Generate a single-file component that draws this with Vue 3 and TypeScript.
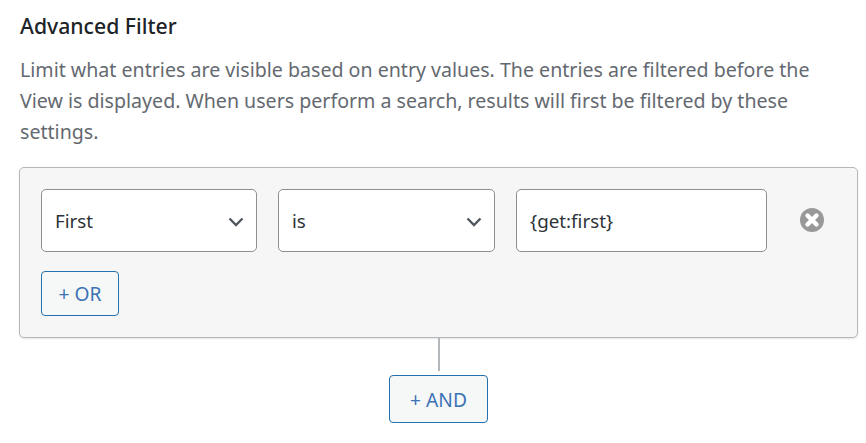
<script setup lang="ts">
import { ref } from 'vue'

const field = ref('First')
const operator = ref('is')
const value = ref('{get:first}')
</script>

<template>
  <main class="page">
    <h2 class="title">Advanced Filter</h2>
    <p class="desc">
      Limit what entries are visible based on entry values. The entries are filtered before the View is displayed. When users perform a search, results will first be filtered by these settings.
    </p>
    <section class="panel">
      <div class="row">
        <div class="select-wrap field">
          <select v-model="field" class="control">
            <option>First</option>
          </select>
          <svg class="chevron" viewBox="0 0 16 10" aria-hidden="true">
            <path d="M1.5 1.5 8 8l6.5-6.5" fill="none" stroke="#50575e" stroke-width="2.4" />
          </svg>
        </div>
        <div class="select-wrap op">
          <select v-model="operator" class="control">
            <option>is</option>
          </select>
          <svg class="chevron" viewBox="0 0 16 10" aria-hidden="true">
            <path d="M1.5 1.5 8 8l6.5-6.5" fill="none" stroke="#50575e" stroke-width="2.4" />
          </svg>
        </div>
        <input v-model="value" class="control text" type="text" />
        <button class="remove" type="button" aria-label="Remove">
          <svg viewBox="0 0 24 24" aria-hidden="true">
            <circle cx="12" cy="12" r="12" fill="#999" />
            <path d="M7.5 7.5l9 9M16.5 7.5l-9 9" stroke="#fff" stroke-width="4.4" stroke-linecap="round" />
          </svg>
        </button>
      </div>
      <button class="btn or" type="button">+ OR</button>
    </section>
    <div class="connector"></div>
    <button class="btn and" type="button">+ AND</button>
  </main>
</template>

<style>
html, body { margin: 0; background: #fff; }
</style>

<style scoped>
.page {
  width: 866px;
  height: 443px;
  box-sizing: border-box;
  padding: 11px 8px 0 19px;
  font-family: "Noto Sans", "Open Sans", sans-serif;
  overflow: hidden;
}
.title {
  margin: 0 0 13px 1px;
  font-size: 21.2px;
  line-height: 30px;
  font-weight: 500;
  color: #1d2327;
}
.desc {
  margin: 0 0 20px 1px;
  width: 800px;
  font-size: 19.6px;
  line-height: 31px;
  color: #646970;
}
.panel {
  box-sizing: border-box;
  height: 171px;
  padding: 21px 21px 0;
  background: #f6f6f7;
  border: 1px solid #b5b8bb;
  border-radius: 5px;
  box-shadow: 0 1px 2px rgba(0, 0, 0, 0.1);
}
.row {
  display: flex;
  align-items: flex-start;
  gap: 21px;
}
.select-wrap { position: relative; }
.field { width: 216px; }
.op { width: 217px; }
.control {
  display: block;
  width: 100%;
  height: 63px;
  box-sizing: border-box;
  padding: 0 12px 0 13px;
  margin: 0;
  background: #fff;
  border: 1px solid #8c8f94;
  border-radius: 5px;
  font: 18.8px "Noto Sans", "Open Sans", sans-serif;
  color: #2c3338;
  appearance: none;
  outline: none;
}
.text { width: 251px; }
.chevron {
  position: absolute;
  right: 13px;
  top: 28px;
  width: 16px;
  height: 10px;
  pointer-events: none;
}
.remove {
  width: 24px;
  height: 24px;
  padding: 0;
  margin: 19px 0 0 12px;
  border: 0;
  background: none;
  display: block;
}
.remove svg { display: block; width: 24px; height: 24px; }
.btn {
  display: block;
  box-sizing: border-box;
  padding: 0;
  background: #f6f7f7;
  border: 1px solid #2271b1;
  border-radius: 4px;
  color: #3a72b5;
  font: 19.2px "Noto Sans", "Open Sans", sans-serif;
}
.or {
  width: 78px;
  height: 45px;
  margin-top: 19px;
}
.connector {
  width: 2px;
  height: 33px;
  margin-left: 419px;
  background: #b5b8bb;
}
.and {
  width: 99px;
  height: 48px;
  margin: 4px 0 0 370px;
}
</style>
